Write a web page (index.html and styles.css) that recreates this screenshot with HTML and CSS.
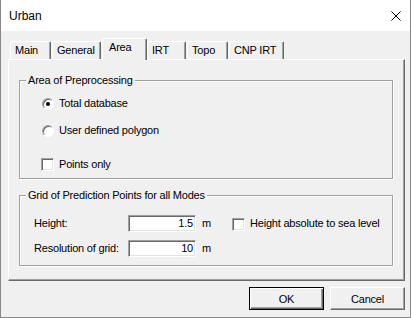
FILE: index.html
```html
<!DOCTYPE html>
<html lang="en">
<head>
  <meta charset="UTF-8" />
  <title>Urban</title>
  <link rel="stylesheet" href="styles.css">
</head>
<body>
  <div class="window">
    <div class="titlebar">
      <span class="title">Urban</span>
      <svg class="close" width="10" height="10" viewBox="0 0 10 10">
        <path d="M0.5 0.5 L9.5 9.5 M9.5 0.5 L0.5 9.5" stroke="#000" stroke-width="1" fill="none" />
      </svg>
    </div>

    <div class="client">
      <div class="tabs">
        <div class="tab tab-main">Main</div>
        <div class="tab tab-general">General</div>
        <div class="tab tab-area active">Area</div>
        <div class="tab tab-irt">IRT</div>
        <div class="tab tab-topo">Topo</div>
        <div class="tab tab-cnp">CNP IRT</div>
      </div>

      <div class="panel">
        <div class="group group-area">
          <div class="group-title">Area of Preprocessing</div>
          <div class="option opt1"><span class="radio checked"></span>Total database</div>
          <div class="option opt2"><span class="radio"></span>User defined polygon</div>
          <div class="option opt3"><span class="check check-left"></span>Points only</div>
        </div>

        <div class="group group-grid">
          <div class="group-title">Grid of Prediction Points for all Modes</div>
          <div class="field field1">
            <span class="field-label">Height:</span>
            <span class="input">1.5</span>
            <span class="unit">m</span>
            <span class="check check-inline"></span>
            <span>Height absolute to sea level</span>
          </div>
          <div class="field field2">
            <span class="field-label">Resolution of grid:</span>
            <span class="input">10</span>
            <span class="unit">m</span>
          </div>
        </div>
      </div>

      <div class="buttons">
        <div class="btn btn-default">OK</div>
        <div class="btn">Cancel</div>
      </div>
    </div>
  </div>
</body>
</html>
```

FILE: styles.css
```css
* { box-sizing: border-box; }
body { margin: 0; font-family: "Liberation Sans", Arial, sans-serif; font-size: 11px; letter-spacing: -0.2px; color: #000; background: #f0f0f0; }

.window { width: 411px; height: 318px; border: 1px solid #888; border-top: 0; display: flex; flex-direction: column; background: #f0f0f0; }
.titlebar { height: 31px; flex: none; background: #fff; display: flex; align-items: center; justify-content: space-between; padding-left: 8px; }
.title { font-size: 12px; letter-spacing: 0; }
.close { margin-right: 9px; }

.client { flex: 1; padding: 7px 0 0 7px; }

.tabs { display: flex; align-items: flex-end; height: 21px; padding-left: 2px; }
.tab { height: 18px; line-height: 17px; padding-left: 4px; margin-right: 1px; white-space: nowrap;
  border-top: 1px solid #fff; border-left: 1px solid #fff; border-right: 1px solid #696969;
  box-shadow: inset -1px 0 #a0a0a0; border-radius: 2px 2px 0 0; }
.tab.active { height: 22px; margin-bottom: -1px; margin-right: 0; padding-left: 6px; padding-top: 1px; line-height: 15px;
  position: relative; z-index: 1; background: #f0f0f0; }
.tab-main { width: 41px; }
.tab-general { width: 49px; }
.tab-area { width: 45px; }
.tab-irt { width: 39px; }
.tab-topo { width: 41px; }
.tab-cnp { width: 55px; }

.panel { width: 397px; height: 222px; padding: 20px 0 0 10px;
  border-top: 1px solid #fff; border-left: 1px solid #fff; border-right: 1px solid #696969; border-bottom: 1px solid #696969;
  box-shadow: inset -1px -1px #a0a0a0; }

.group { width: 374px; border: 1px solid #a0a0a0; box-shadow: inset 1px 1px #fff, 1px 1px #fff;
  display: flex; flex-direction: column; align-items: flex-start; }
.group-title { background: #f0f0f0; line-height: 13px; margin: -7px 0 0 6px; padding: 0 2px; }
.group-area { height: 99px; }
.group-grid { height: 71px; margin-top: 16px; }
.group-area > .option { margin-left: 22px; }
.group-grid > .field { margin-left: 14px; }

.option { display: flex; align-items: center; height: 13px; line-height: 13px; }
.opt1 { margin-top: 10px; }
.opt2 { margin-top: 14px; }
.opt3 { margin-top: 21px; }

.radio { width: 12px; height: 12px; margin-right: 5px; border-radius: 50%; background: #fff;
  border: 1px solid; border-color: #a0a0a0 #fff #fff #a0a0a0; box-shadow: inset 1px 1px #696969;
  display: flex; align-items: center; justify-content: center; }
.radio.checked::after { content: ""; width: 4px; height: 4px; border-radius: 50%; background: #000; }

.check { width: 13px; height: 13px; flex: none; background: #fff;
  border: 1px solid; border-color: #a0a0a0 #fff #fff #a0a0a0;
  box-shadow: inset 1px 1px #696969, inset -1px -1px #e3e3e3; }
.group-area > .opt3 { margin-left: 21px; }
.check-left { margin-right: 5px; }
.check-inline { margin-right: 5px; align-self: flex-start; margin-top: 3px; }

.field { display: flex; align-items: center; height: 17px; line-height: 13px; }
.field1 { margin-top: 13px; }
.field2 { margin-top: 8px; }
.field-label { width: 94px; }
.input { width: 68px; height: 17px; background: #fff; text-align: right; padding-right: 2px; line-height: 15px;
  border: 1px solid; border-color: #a0a0a0 #fff #fff #a0a0a0;
  box-shadow: inset 1px 1px #696969, inset -1px -1px #e3e3e3; }
.unit { width: 36px; padding-left: 6px; }

.buttons { display: flex; justify-content: flex-end; gap: 6px; width: 397px; margin-top: 6px; }
.btn { width: 75px; height: 23px; display: flex; align-items: center; justify-content: center;
  border: 1px solid; border-color: #fff #696969 #696969 #fff; box-shadow: inset -1px -1px #a0a0a0; }
.btn-default { border-color: #000; box-shadow: inset 1px 1px #fff, inset -1px -1px #696969, inset -2px -2px #a0a0a0; }
```
